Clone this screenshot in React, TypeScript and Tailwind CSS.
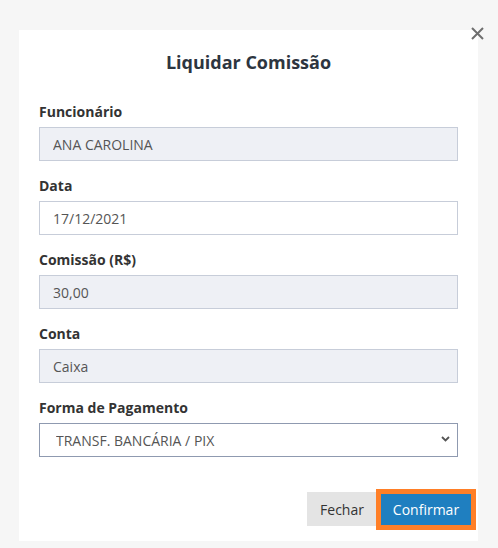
import React, { useState } from 'react';

const inputBase =
    'block w-[419px] h-[34px] px-[13px] border text-[14px] text-[#555] outline-none';

const Field: React.FC<{ label: string; children: React.ReactNode }> = ({ label, children }) => (
    <div className="flex flex-col">
        <label className="h-[20px] leading-[20px] text-[14px] font-bold text-[#333]">{label}</label>
        <div className="mt-[5px] mb-[15px]">{children}</div>
    </div>
);

export default function App() {
    const [data, setData] = useState('17/12/2021');
    const [forma, setForma] = useState('pix');

    return (
        <div className="min-h-[548px] w-[498px] bg-[#f6f6f6] pt-[30px] relative" style={{ fontFamily: '"Open Sans", "Liberation Sans", sans-serif' }}>
            <button className="absolute left-[470px] top-[26px] w-[14px] h-[14px] flex items-center justify-center text-[#6f6f6f]">
                <svg width="13" height="13" viewBox="0 0 13 13" fill="none" stroke="currentColor" strokeWidth="2">
                    <path d="M1 1 L12 12 M12 1 L1 12" />
                </svg>
            </button>

            <div className="ml-[19px] w-[459px] bg-white pt-[20px] pb-[15px]">
                <h2 className="text-center text-[18px] leading-[24px] font-bold text-[#2d3540]">Liquidar Comissão</h2>

                <div className="px-[20px] pt-[28px]">
                    <Field label="Funcionário">
                        <input disabled value="ANA CAROLINA" className={`${inputBase} bg-[#eef0f5] border-[#c7cdd9]`} />
                    </Field>
                    <Field label="Data">
                        <input
                            value={data}
                            onChange={(e) => setData(e.target.value)}
                            className={`${inputBase} bg-white border-[#c7cdd9]`}
                        />
                    </Field>
                    <Field label="Comissão (R$)">
                        <input disabled value="30,00" className={`${inputBase} bg-[#eef0f5] border-[#c7cdd9]`} />
                    </Field>
                    <Field label="Conta">
                        <input disabled value="Caixa" className={`${inputBase} bg-[#eef0f5] border-[#c7cdd9]`} />
                    </Field>
                    <div className="flex flex-col">
                        <label className="h-[20px] leading-[20px] text-[14px] font-bold text-[#333]">Forma de Pagamento</label>
                        <div className="mt-[5px] relative w-[419px]">
                            <select
                                value={forma}
                                onChange={(e) => setForma(e.target.value)}
                                className="block w-[419px] h-[34px] pl-[16px] pr-[30px] border border-[#8f9ab0] bg-white text-[14px] text-[#555] appearance-none outline-none"
                            >
                                <option value="pix">TRANSF. BANCÁRIA / PIX</option>
                                <option value="dinheiro">DINHEIRO</option>
                            </select>
                            <svg className="absolute right-[8px] top-[13px] pointer-events-none" width="9" height="6" viewBox="0 0 9 6" fill="none" stroke="#555" strokeWidth="1.8">
                                <path d="M1 1 L4.5 4.5 L8 1" />
                            </svg>
                        </div>
                    </div>
                </div>

                <div className="flex justify-end items-center gap-[4px] pr-[7px] mt-[35px]">
                    <button className="w-[70px] h-[34px] bg-[#e4e4e4] text-[14px] text-[#333]">Fechar</button>
                    <button className="w-[90px] h-[31px] bg-[#1f7fc0] text-[14px] text-white outline-[5px] outline-solid outline-[#ff7f27]">
                        Confirmar
                    </button>
                </div>
            </div>
        </div>
    );
}
